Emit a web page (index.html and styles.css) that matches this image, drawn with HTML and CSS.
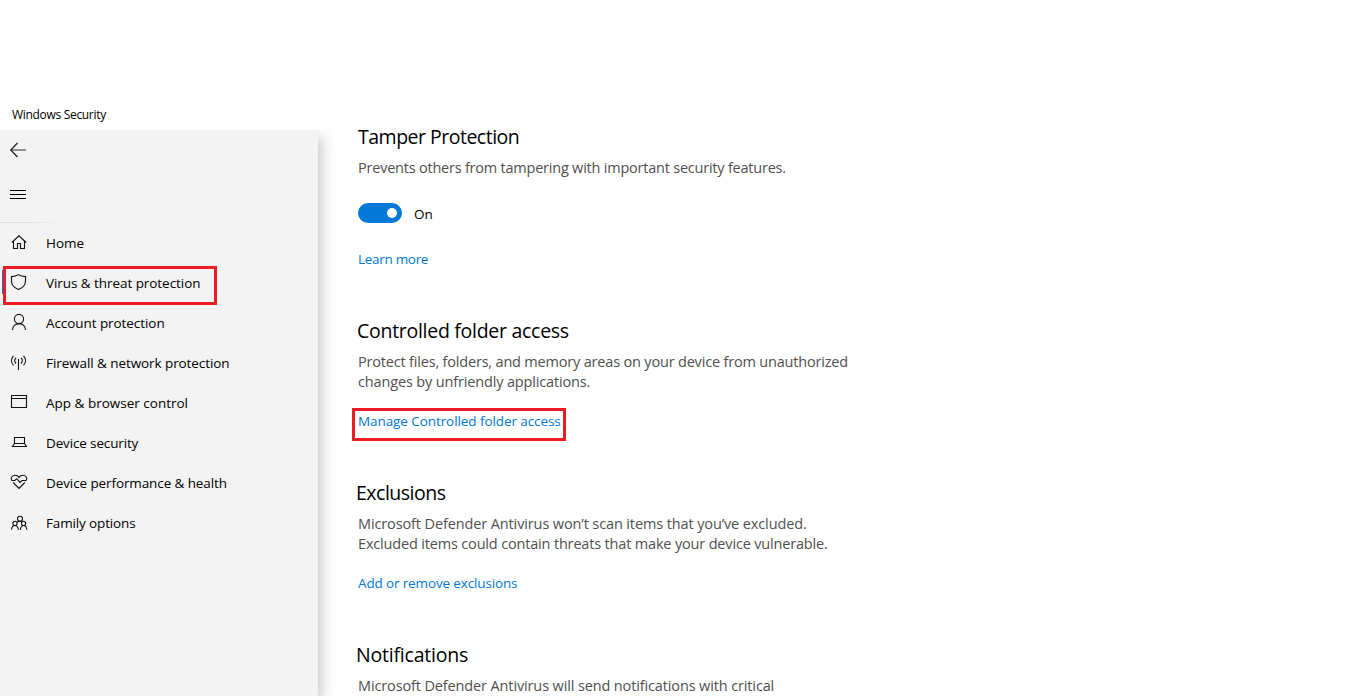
FILE: index.html
```html
<!DOCTYPE html>
<html lang="en">
<head>
<meta charset="utf-8">
<title>Windows Security</title>
<link rel="stylesheet" href="styles.css">
</head>
<body>
<div class="window">
  <div class="left">
    <div class="titlebar"><span class="t-title">Windows Security</span></div>
    <nav class="sidebar">
      <div class="tool back"><svg width="18" height="16" viewBox="0 0 18 16"><path d="M.5 8H16" stroke="#777" stroke-width="1.6"/><path d="M7.5 1L.7 8L7.5 15" stroke="#111"/></svg></div>
      <div class="tool menu"><svg width="18" height="16" viewBox="0 0 18 16"><path d="M1 3.5H17M1 7.5H17M1 11.5H17"/></svg></div>
      <div class="rule"></div>
      <a class="item"><svg width="18" height="18" viewBox="0 0 18 18"><path d="M1.8 9.5L9 2.8L16.2 9.5M3.5 8V15.5H7.5V10.5H10.5V15.5H14.5V8"/></svg><span class="n1">Home</span></a>
      <a class="item active"><svg width="18" height="18" viewBox="0 0 18 18"><path d="M8.5 1.6C6.5 3 4 3.5 1.5 3.6V8C1.5 12 4.5 15 8.5 16.6C12.5 15 15.5 12 15.5 8V3.6C13 3.5 10.5 3 8.5 1.6Z"/></svg><span class="n2">Virus &amp; threat protection</span></a>
      <a class="item"><svg width="18" height="18" viewBox="0 0 18 18"><circle cx="9" cy="6" r="4.6"/><path d="M2.5 17C2.5 13.4 5.3 10.6 9 10.6S15.5 13.4 15.5 17"/></svg><span class="n3">Account protection</span></a>
      <a class="item"><svg width="18" height="18" viewBox="0 0 18 18"><path d="M8.5 6V17M3.5 2.8C.8 5.7 .8 9.5 3.5 12.3M13.5 2.8C16.2 5.7 16.2 9.5 13.5 12.3M6 4.8C4.2 6.5 4.2 8.7 6 10.5M11 4.8C12.8 6.5 12.8 8.7 11 10.5"/></svg><span class="n4">Firewall &amp; network protection</span></a>
      <a class="item"><svg width="18" height="18" viewBox="0 0 18 18"><path d="M1.5 2.5H16.5V14.5H1.5ZM1.5 5.5H16.5"/></svg><span class="n5">App &amp; browser control</span></a>
      <a class="item"><svg width="18" height="18" viewBox="0 0 18 18"><path d="M4.5 10.5V4.5H14.5V10.5H4.5L2.5 13.5H16.5L14.5 10.5"/></svg><span class="n6">Device security</span></a>
      <a class="item"><svg width="18" height="18" viewBox="0 0 18 18"><path d="M1.8 7.2C.2 4.5 2.6 2.3 5.2 2.3C7 2.3 8.3 3.2 9 4.4C9.7 3.2 11 2.3 12.8 2.3C15.4 2.3 17.8 4.5 16.2 7.2M1.5 7.5H4.8L6.8 5.7L10 9.4L12 7.5H16.5M3.2 9.5L9 15.4L14.8 9.5"/></svg><span class="n7">Device performance &amp; health</span></a>
      <a class="item"><svg width="18" height="18" viewBox="0 0 18 18"><circle cx="10" cy="5.8" r="2.5"/><circle cx="5" cy="10.4" r="2.1"/><circle cx="13.6" cy="10.4" r="2.1"/><path d="M1.5 16.8C1.7 14 3 12.5 5 12.5S8 14 8.5 16.8M10.3 16.8C10.7 14 11.6 12.5 13.6 12.5S16.6 14 16.8 16.8M7.3 9.3C8.3 8.2 10.6 8 11.8 8.8"/></svg><span class="n8">Family options</span></a>
    </nav>
  </div>
  <main class="content">
    <section class="s1">
      <h2 class="h-a">Tamper Protection</h2>
      <p><span class="p1">Prevents others from tampering with important security features.</span></p>
      <div class="switch"><span class="track"><span class="knob"></span></span><span class="on">On</span></div>
      <a class="link"><span class="l1">Learn more</span></a>
    </section>
    <section>
      <h2 class="h-b">Controlled folder access</h2>
      <p><span class="p2">Protect files, folders, and memory areas on your device from unauthorized</span><br><span class="p3">changes by unfriendly applications.</span></p>
      <a class="link marked"><span class="l2">Manage Controlled folder access</span></a>
    </section>
    <section>
      <h2 class="h-c">Exclusions</h2>
      <p><span class="p4">Microsoft Defender Antivirus won’t scan items that you’ve excluded.</span><br><span class="p5">Excluded items could contain threats that make your device vulnerable.</span></p>
      <a class="link"><span class="l3">Add or remove exclusions</span></a>
    </section>
    <section>
      <h2 class="h-d">Notifications</h2>
      <p><span class="p6">Microsoft Defender Antivirus will send notifications with critical</span></p>
    </section>
  </main>
</div>
</body>
</html>
```
FILE: styles.css
```css
*, *::before, *::after { box-sizing: border-box; margin: 0; padding: 0; }
body { background: #fff; color: #000; font-family: "Open Sans", "Noto Sans", sans-serif; overflow: hidden; }
.window { display: flex; height: 696px; overflow: hidden; }
.left { width: 318px; display: flex; flex-direction: column; }
.titlebar { height: 130px; padding: 105px 0 0 12px; font-size: 12px; line-height: 20px; white-space: nowrap; }
.sidebar { flex: 1; background: #f3f3f3; box-shadow: 3px 6px 14px rgba(0,0,0,.24); clip-path: inset(0 -24px 0 0); }
svg { display: block; fill: none; stroke: #111; stroke-width: 1.1; flex: none; }
.tool { padding-left: 9px; }
.back { height: 57px; padding: 12px 0 0 10px; }
.menu { height: 35px; }
.menu svg { stroke: #000; stroke-width: 1; }
.rule { height: 1px; width: 60px; background: linear-gradient(90deg, #dedede 50%, #f3f3f3); }
.item { display: flex; align-items: center; gap: 18px; height: 40px; padding: 0 0 0 10px; font-size: 13.5px; line-height: 20px; white-space: nowrap; }
.item svg { margin-bottom: 2px; }
.active { position: relative; }
.active::before { content: ""; position: absolute; left: 2px; top: 7px; width: 4px; height: 24px; background: #0078d7; }
.active::after { content: ""; position: absolute; left: 3px; top: 3px; width: 214px; height: 39px; border: 3px solid #ed1c24; }
.content { flex: 1; padding: 124px 0 0 40px; white-space: nowrap; }
section { margin-bottom: 49px; }
h2 { font-size: 19.5px; font-weight: 400; line-height: 26px; margin: 0 0 8px -1px; }
p { font-size: 14.5px; line-height: 20px; color: #505050; margin-bottom: 19px; }
.switch { display: flex; align-items: center; gap: 12px; height: 20px; margin: 25px 0 26px; font-size: 13.5px; }
.on { padding-top: 2px; }
.track { width: 44px; height: 20px; border-radius: 10px; background: #0078d7; padding: 5px; display: flex; justify-content: flex-end; }
.knob { width: 10px; height: 10px; border-radius: 50%; background: #fff; }
.link { display: block; position: relative; font-size: 13.5px; line-height: 20px; color: #0078d7; }
.marked::after { content: ""; position: absolute; left: -6px; top: -3px; width: 214px; height: 33px; border: 3px solid #ed1c24; }

/* Tracking per label */
.t-title { letter-spacing: -.31px; }
.h-a { letter-spacing: -.5px; margin-left: 0; }
.h-b { letter-spacing: -.28px; }
.h-c { letter-spacing: -.5px; margin-left: -2px; }
.h-d { letter-spacing: -.2px; margin-left: -2px; }
.p1 { letter-spacing: -.22px; }
.p2 { letter-spacing: -.185px; }
.p3 { letter-spacing: -.15px; }
.p4 { letter-spacing: -.12px; }
.p5 { letter-spacing: -.17px; }
.p6 { letter-spacing: -.13px; }
.n2 { letter-spacing: -.06px; }
.n3 { letter-spacing: -.07px; }
.n4 { letter-spacing: -.08px; }
.n6, .n8 { letter-spacing: -.14px; }
.n7 { letter-spacing: -.1px; }
.l1 { letter-spacing: -.3px; }
.l2 { letter-spacing: -.08px; }
.l3 { letter-spacing: -.14px; }
```
